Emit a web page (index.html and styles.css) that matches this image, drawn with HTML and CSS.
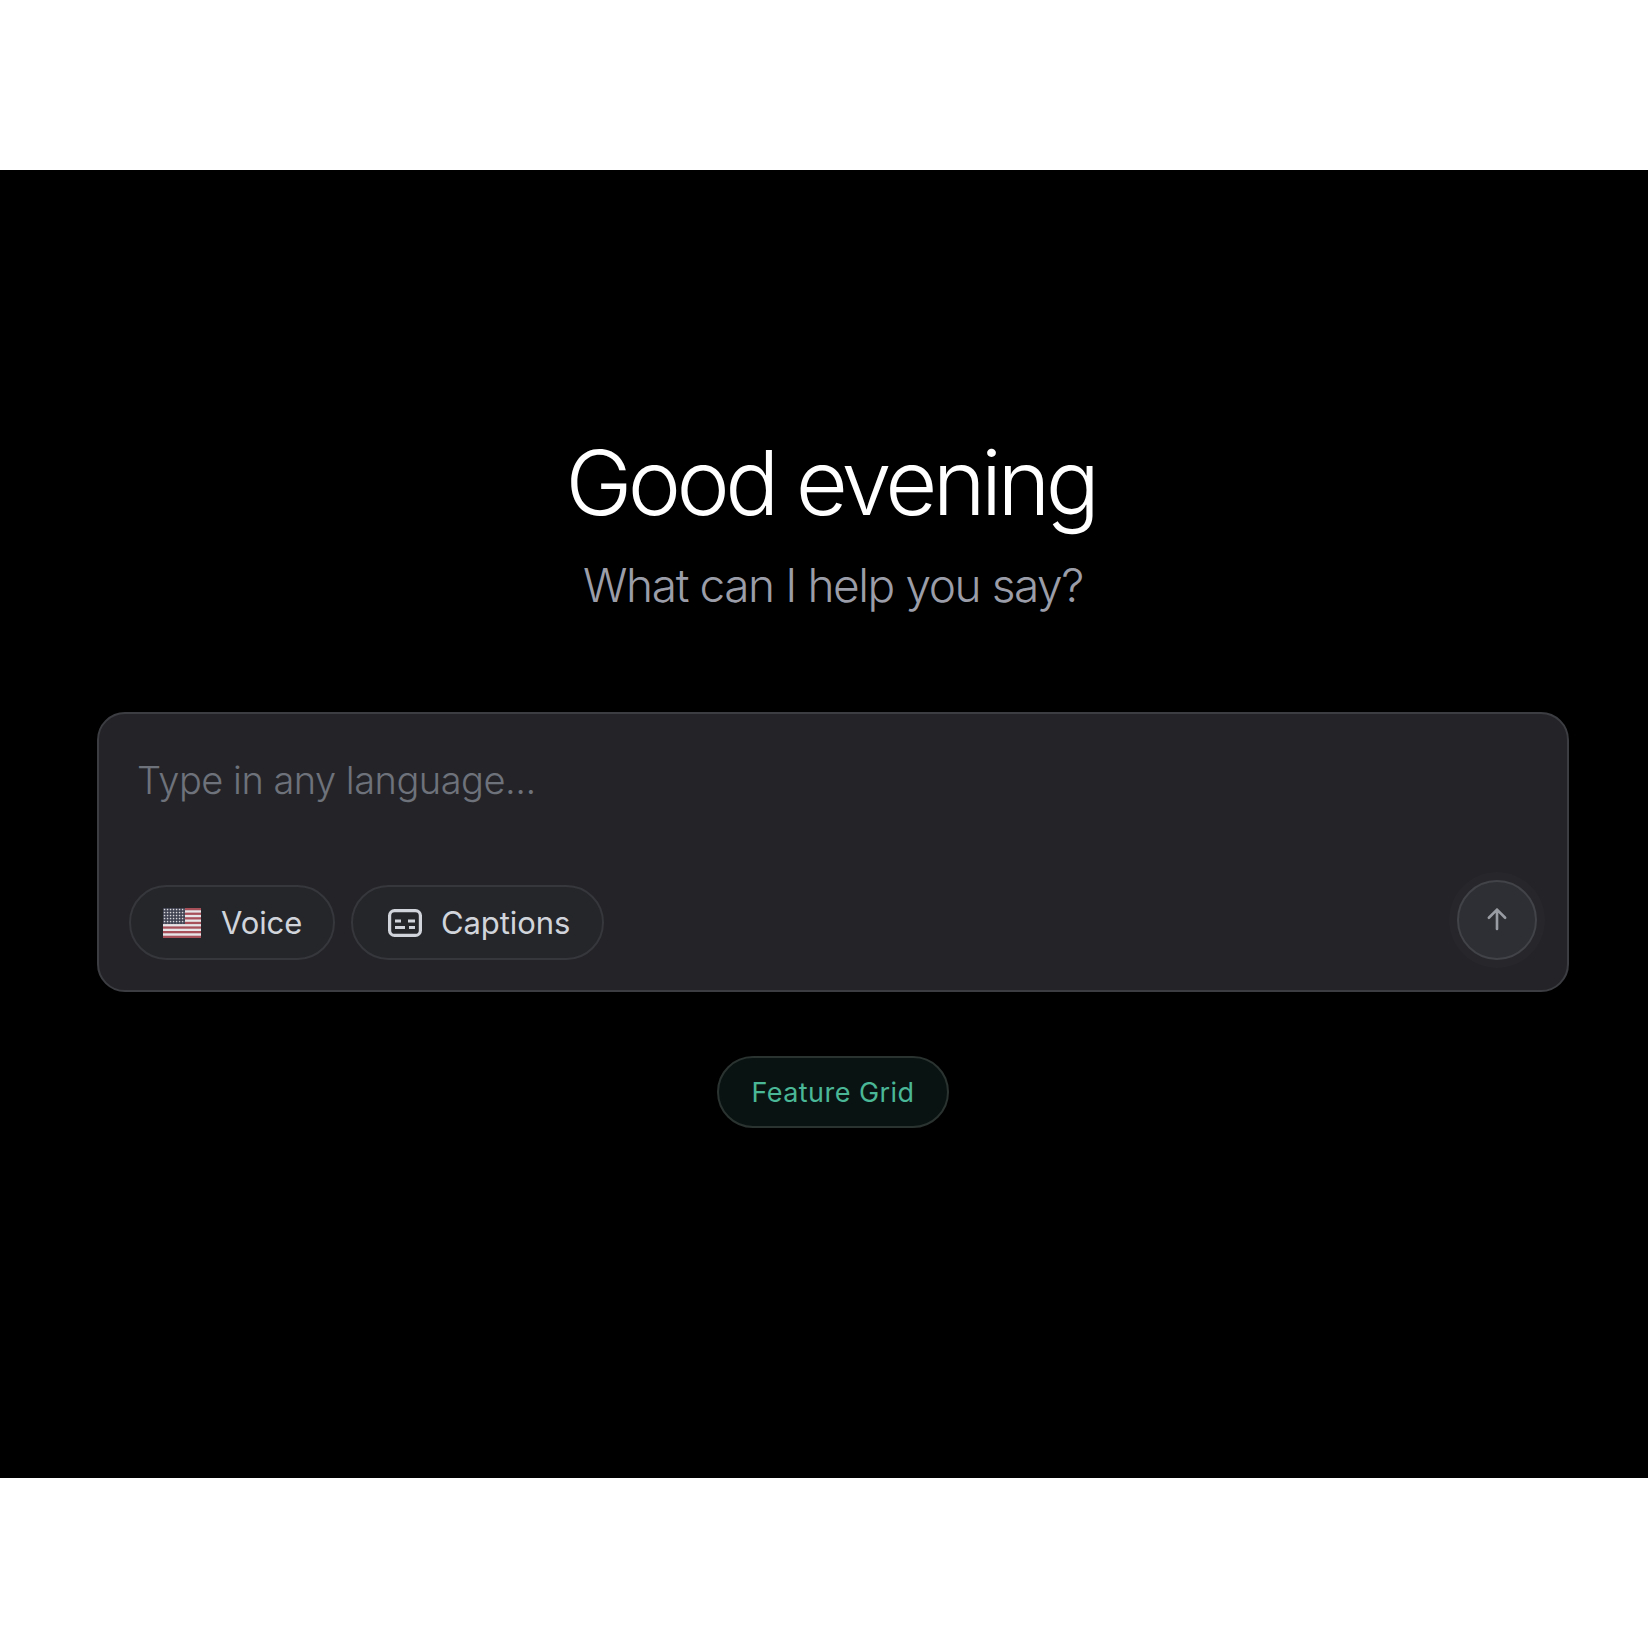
FILE: index.html
```html
<!DOCTYPE html>
<html lang="en">
<head>
<meta charset="utf-8">
<title>Good evening</title>
<link rel="stylesheet" href="styles.css">
</head>
<body>
<main class="stage">
  <h1 class="title">Good evening</h1>
  <p class="subtitle">What can I help you say?</p>
  <section class="composer">
    <div class="placeholder">Type in any language...</div>
    <div class="toolbar">
      <button class="pill pill-voice" type="button">
        <svg class="flag" viewBox="0 0 38 30" width="38" height="30" aria-hidden="true">
          <defs>
            <pattern id="stars" width="3" height="3" patternUnits="userSpaceOnUse">
              <rect width="3" height="3" fill="#3a3d4c"/>
              <rect x="0.8" y="0.8" width="1.5" height="1.5" fill="#d8d8dc"/>
            </pattern>
          </defs>
          <rect width="38" height="30" fill="#e6e6e8"/>
          <rect y="0" width="38" height="2.3" fill="#a8505a"/>
          <rect y="4.6" width="38" height="2.3" fill="#a8505a"/>
          <rect y="9.2" width="38" height="2.3" fill="#a8505a"/>
          <rect y="13.8" width="38" height="2.3" fill="#a8505a"/>
          <rect y="18.4" width="38" height="2.3" fill="#a8505a"/>
          <rect y="23" width="38" height="2.3" fill="#a8505a"/>
          <rect y="27.7" width="38" height="2.3" fill="#a8505a"/>
          <rect width="22" height="16" fill="url(#stars)"/>
        </svg>
        <span>Voice</span>
      </button>
      <button class="pill pill-captions" type="button">
        <svg class="cc" viewBox="0 0 34 28" width="34" height="28" fill="none" stroke="currentColor" stroke-width="3.2" aria-hidden="true">
          <rect x="1.6" y="1.6" width="30.8" height="24.8" rx="5"/>
          <path d="M7 12h6M20 12h7M7 18.5h10M21 18.5h6" stroke-width="2.8"/>
        </svg>
        <span>Captions</span>
      </button>
      <button class="send" type="button" aria-label="Send">
        <svg viewBox="0 0 24 24" width="30" height="30" fill="none" stroke="currentColor" stroke-width="2.1" stroke-linecap="round" stroke-linejoin="round" aria-hidden="true">
          <path d="M12 20V4.5M5.5 11 12 4.5 18.5 11"/>
        </svg>
      </button>
    </div>
  </section>
  <button class="feature" type="button">Feature Grid</button>
</main>
</body>
</html>
```
FILE: styles.css
```css
* { box-sizing: border-box; }
html, body { margin: 0; background: #fff; }
body { padding-top: 170px; font-family: Inter, "Noto Sans", sans-serif; }
button { font-family: inherit; cursor: pointer; }
.stage {
  height: 1308px;
  background: #000;
  display: flex;
  flex-direction: column;
  align-items: center;
  padding: 260px 79px 0 97px;
}
.title {
  margin: 0;
  padding-right: 5px;
  font-size: 90px;
  line-height: 106px;
  font-weight: 300;
  letter-spacing: -4.6px;
  color: #fff;
}
.subtitle {
  margin: 20px 0 0;
  font-size: 46px;
  line-height: 58px;
  font-weight: 300;
  letter-spacing: -1.42px;
  color: #9b9ea8;
}
.composer {
  width: 100%;
  height: 280px;
  margin-top: 98px;
  background: #242428;
  border: 2px solid #3c3d42;
  border-radius: 28px;
  padding: 0 30px 30px 30px;
  display: flex;
  flex-direction: column;
  justify-content: space-between;
}
.placeholder {
  margin: 43px 0 0 8px;
  font-size: 38px;
  line-height: 46px;
  font-weight: 300;
  letter-spacing: -0.5px;
  color: #6e727b;
}
.toolbar { display: flex; align-items: flex-end; gap: 16px; }
.pill {
  height: 75px;
  border-radius: 38px;
  border: 2px solid #36373c;
  background: #25262a;
  color: #d1d5db;
  font-size: 31px;
  font-weight: 400;
  letter-spacing: -0.1px;
  display: flex;
  align-items: center;
  gap: 20px;
  padding: 0;
}
.pill-voice { width: 206px; padding-left: 32px; }
.pill-captions { width: 253px; padding-left: 35px; gap: 19px; }
.flag, .cc { flex: none; display: block; }
.send {
  margin-left: auto;
  width: 80px;
  height: 80px;
  border-radius: 50%;
  border: 2px solid #414349;
  background: #2d2f34;
  color: #9a9ca3;
  box-shadow: 0 0 0 8px rgba(255, 255, 255, 0.015);
  display: flex;
  align-items: center;
  justify-content: center;
  padding: 0 0 2px;
}
.feature {
  margin-top: 64px;
  width: 232px;
  height: 72px;
  border-radius: 36px;
  border: 2px solid #2b3331;
  background: #091412;
  color: #4ab796;
  font-size: 27px;
  letter-spacing: 0.45px;
  font-weight: 400;
}
```
